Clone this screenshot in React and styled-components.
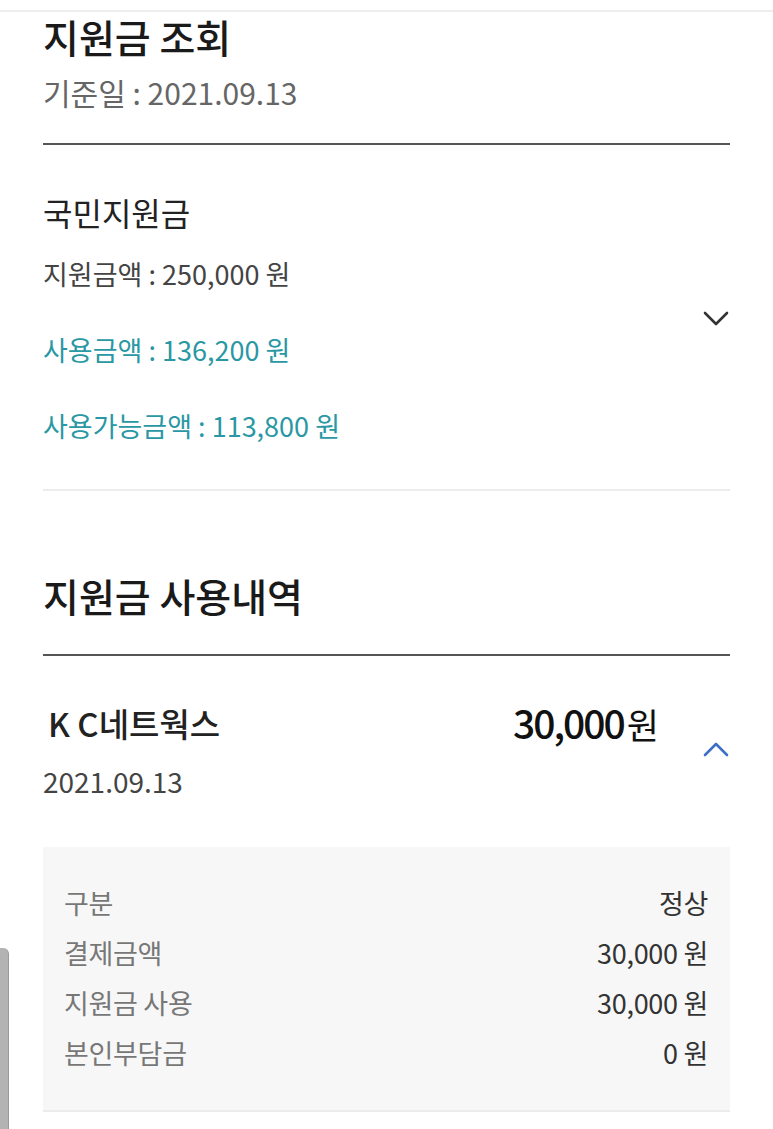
import React from 'react';
import styled, { createGlobalStyle } from 'styled-components';

const GlobalStyle = createGlobalStyle`
  html, body {
    margin: 0;
    padding: 0;
    background: #fff;
  }
  body {
    font-family: "Noto Sans CJK KR", "Noto Sans", sans-serif;
    color: #222;
  }
`;

const support = {
  name: '국민지원금',
  total: '250,000',
  used: '136,200',
  left: '113,800',
};

const details = [
  { label: '구분', value: '정상' },
  { label: '결제금액', value: '30,000 원' },
  { label: '지원금 사용', value: '30,000 원' },
  { label: '본인부담금', value: '0 원' },
];

const Chevron = ({ up, color }) => (
  <ChevronBox>
    <svg width="28" height="16" viewBox="0 0 28 16">
      <polyline
        points={up ? '3,14 14,3 25,14' : '3,3 14,14 25,3'}
        fill="none"
        stroke={color}
        strokeWidth="2.6"
        strokeLinecap="round"
        strokeLinejoin="round"
      />
    </svg>
  </ChevronBox>
);

const App = () => {
  return (
    <>
      <GlobalStyle />
      <TopLine />
      <Page>
        <PageTitle>지원금 조회</PageTitle>
        <BaseDate>기준일 : 2021.09.13</BaseDate>
        <Divider $strong />

        <SupportCard>
          <SupportInfo>
            <CardTitle>{support.name}</CardTitle>
            <AmountRow>지원금액 : {support.total} 원</AmountRow>
            <AmountRow $accent>사용금액 : {support.used} 원</AmountRow>
            <AmountRow $accent>사용가능금액 : {support.left} 원</AmountRow>
          </SupportInfo>
          <Chevron color="#333" />
        </SupportCard>
        <Divider />

        <SectionTitle>지원금 사용내역</SectionTitle>
        <Divider $strong $wide />

        <HistoryHead>
          <HistoryInfo>
            <NameRow>
              <StoreName>K C네트웍스</StoreName>
              <Price>30,000<span>원</span></Price>
            </NameRow>
            <UseDate>2021.09.13</UseDate>
          </HistoryInfo>
          <Chevron up color="#3c6fc8" />
        </HistoryHead>

        <DetailBox>
          {details.map((d) => (
            <DetailRow key={d.label}>
              <DetailLabel>{d.label}</DetailLabel>
              <DetailValue>{d.value}</DetailValue>
            </DetailRow>
          ))}
        </DetailBox>
      </Page>
      <ScrollThumb />
    </>
  );
};

export default App;

const TopLine = styled.div`
  height: 10px;
  border-bottom: 2px solid #eeeeee;
`;

const Page = styled.div`
  padding: 0 43px;
`;

const PageTitle = styled.h1`
  margin: 4px 0 0;
  font-size: 39px;
  font-weight: 500;
  line-height: 40px;
  color: #1a1a1a;
`;

const BaseDate = styled.div`
  margin-top: 20px;
  font-size: 30px;
  line-height: 32px;
  color: #666;
`;

const Divider = styled.div`
  height: 0;
  border-top: 2px solid ${(p) => (p.$strong ? '#555' : '#ececec')};
  margin-top: ${(p) => (p.$strong ? (p.$wide ? '36px' : '35px') : '47px')};
`;

const SupportCard = styled.div`
  display: flex;
  align-items: center;
  margin-top: 49px;
`;

const SupportInfo = styled.div`
  flex: 1;
  display: flex;
  flex-direction: column;
  gap: 44px;
`;

const CardTitle = styled.div`
  font-size: 32px;
  line-height: 36px;
  color: #222;
  margin-bottom: -16px;
`;

const AmountRow = styled.div`
  font-size: 27px;
  line-height: 32px;
  color: ${(p) => (p.$accent ? '#2a98a4' : '#444')};
`;

const ChevronBox = styled.div`
  display: flex;
  align-items: center;
  justify-content: center;
  width: 28px;
`;

const SectionTitle = styled.h2`
  margin: 81px 0 0;
  font-size: 39px;
  font-weight: 500;
  line-height: 46px;
  color: #1a1a1a;
`;

const HistoryHead = styled.div`
  display: flex;
  align-items: center;
  margin-top: 45px;
`;

const HistoryInfo = styled.div`
  flex: 1;
  margin-right: 45px;
`;

const NameRow = styled.div`
  display: flex;
  justify-content: space-between;
  align-items: center;
`;

const StoreName = styled.div`
  font-size: 33px;
  font-weight: 500;
  line-height: 38px;
  color: #222;
  padding-left: 5px;
`;

const Price = styled.div`
  font-size: 39px;
  font-weight: 500;
  line-height: 42px;
  letter-spacing: -2px;
  color: #111;

  span {
    font-size: 35px;
    font-weight: 400;
    margin-left: 3px;
  }
`;

const UseDate = styled.div`
  margin-top: 20px;
  font-size: 28px;
  line-height: 32px;
  color: #444;
`;

const DetailBox = styled.div`
  margin-top: 50px;
  padding: 31px 22px 32px 21px;
  background: #f7f7f7;
  border-bottom: 2px solid #ececec;
`;

const DetailRow = styled.div`
  display: flex;
  justify-content: space-between;
  font-size: 27px;
  line-height: 50px;
  letter-spacing: -0.3px;
`;

const DetailLabel = styled.span`
  color: #777;
`;

const DetailValue = styled.span`
  color: #333;
`;

const ScrollThumb = styled.div`
  position: fixed;
  left: 0;
  top: 948px;
  bottom: 0;
  width: 8px;
  background: #b3b3b3;
  border-right: 1px solid #9a9a9a;
  border-top-right-radius: 6px;
`;
